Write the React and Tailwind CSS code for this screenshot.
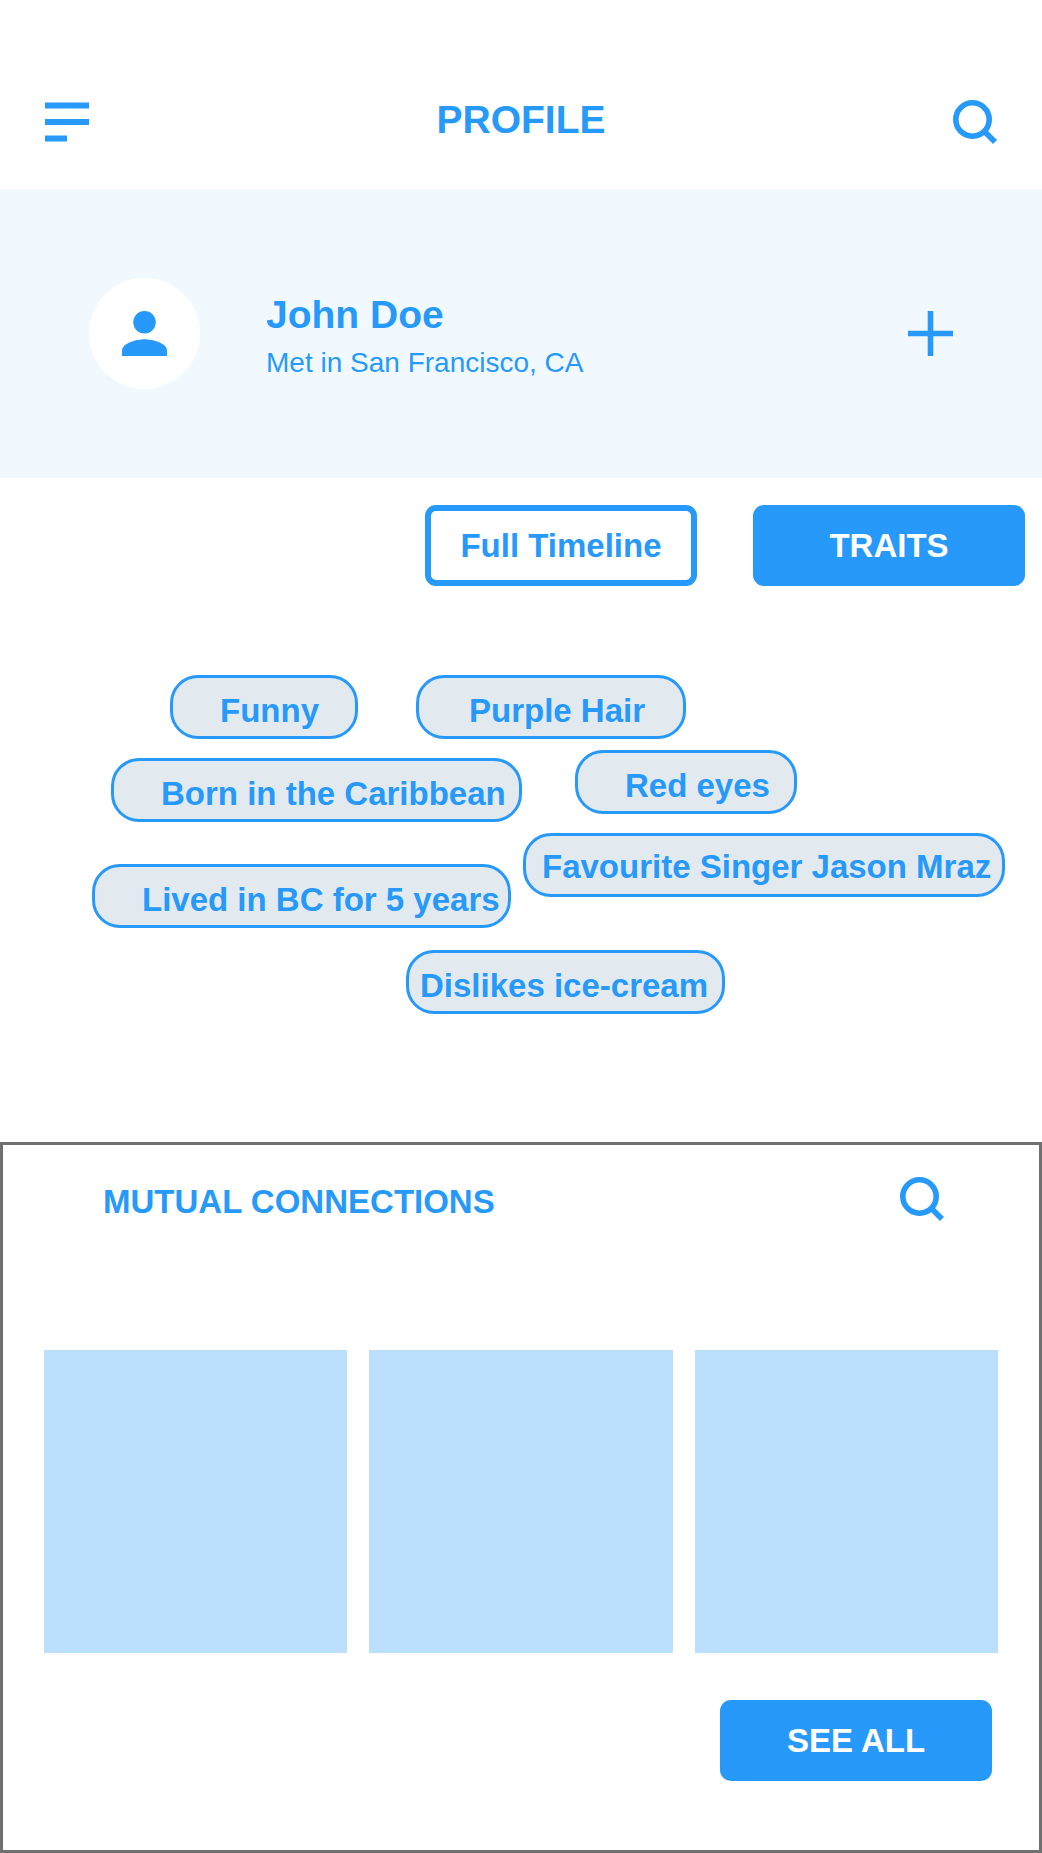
const traitRows = [
  {
    row: "gap-[58px] pl-[170px]",
    traits: [
      { label: "Funny", box: "w-[188px] pl-[47px] pt-[8px]" },
      { label: "Purple Hair", box: "w-[270px] pl-[50px] pt-[8px]" },
    ],
  },
  {
    row: "mt-[11px] gap-[53px] pl-[111px]",
    traits: [
      { label: "Born in the Caribbean", box: "mt-2 w-[411px] pl-[47px] pt-[8px]" },
      { label: "Red eyes", box: "w-[222px] pl-[47px] pt-[8px]" },
    ],
  },
  {
    row: "mt-[11px] gap-[12px] pl-[92px]",
    traits: [
      { label: "Lived in BC for 5 years", box: "mt-[31px] w-[419px] pl-[47px] pt-[8px]" },
      { label: "Favourite Singer Jason Mraz", box: "w-[482px] pl-4 pt-[4px]" },
    ],
  },
  {
    row: "mt-[22px] pl-[406px]",
    traits: [{ label: "Dislikes ice-cream", box: "w-[319px] pl-[11px] pt-[8px]" }],
  },
];

const connections = ["First connection", "Second connection", "Third connection"];

function SearchIcon() {
  return (
    <svg className="size-[44px]" viewBox="0 0 44 44" fill="none" stroke="currentColor" strokeWidth="5.6" aria-hidden="true">
      <circle cx="19.5" cy="19.5" r="16.7" />
      <path d="M31 31L42 42" />
    </svg>
  );
}

function ActionButton({ outlined, children }) {
  return (
    <button
      type="button"
      className={
        outlined
          ? "h-[81px] w-[272px] rounded-[11px] border-[6px] border-[#2699fb] bg-white text-[33px] font-bold"
          : "h-[81px] w-[272px] rounded-[11px] bg-[#2699fb] text-[33px] font-bold text-white"
      }
    >
      {children}
    </button>
  );
}

export default function App() {
  return (
    <main className="bg-white font-['Liberation_Sans',Arial,sans-serif] text-[#2699fb]">
      <header className="flex h-[189px] items-center justify-between px-[45px] pt-[55px]">
        <button type="button" aria-label="Menu">
          <svg className="h-[40px] w-[44px]" viewBox="0 0 44 40" fill="currentColor" aria-hidden="true">
            <path d="M0 .5h44v6H0zM0 17h44v6H0zM0 33.500h22v6H0z" />
          </svg>
        </button>
        <h1 className="pb-1 text-[39px] leading-[48px] font-bold">PROFILE</h1>
        <button type="button" aria-label="Search">
          <SearchIcon />
        </button>
      </header>

      <section className="flex items-start bg-[#f1f9ff] px-[89px] pt-[89px] pb-[89px]">
        <div className="flex size-[111px] shrink-0 items-center justify-center rounded-full bg-white">
          <svg className="size-[45px]" viewBox="4 4 16 16" fill="currentColor" aria-hidden="true">
            <circle cx="12" cy="8" r="4" />
            <path d="M12 14c-2.67 0-8 1.34-8 4v2h16v-2c0-2.66-5.33-4-8-4z" />
          </svg>
        </div>
        <div className="ml-[66px] grow pt-[11px]">
          <h2 className="text-[39px] leading-[52px] font-bold">John Doe</h2>
          <p className="text-[28px] leading-[44px]">Met in San Francisco, CA</p>
        </div>
        <button type="button" aria-label="Add" className="mt-[33px]">
          <svg className="size-[45px]" viewBox="0 0 45 45" fill="none" stroke="currentColor" strokeWidth="5.6" aria-hidden="true">
            <path d="M22.5 0v45M0 22.5h45" />
          </svg>
        </button>
      </section>

      <div className="flex justify-end gap-[56px] pt-[27px] pr-[17px]">
        <ActionButton outlined>Full Timeline</ActionButton>
        <ActionButton>TRAITS</ActionButton>
      </div>

      <section aria-label="Traits" className="pt-[89px]">
        {traitRows.map(({ row, traits }) => (
          <ul key={traits[0].label} className={`flex items-start ${row}`}>
            {traits.map(({ label, box }) => (
              <li
                key={label}
                className={`flex h-[64px] shrink-0 items-center rounded-[28px] border-[3px] border-[#2699fb] bg-[#e2eaf0] text-[33px] font-bold whitespace-nowrap ${box}`}
              >
                {label}
              </li>
            ))}
          </ul>
        ))}
      </section>

      <section className="mt-[128px] border-[3px] border-[#707070] px-[41px] pt-[32px] pb-[69px]">
        <div className="flex items-start justify-between pr-[54px] pl-[59px]">
          <h2 className="pt-[1px] text-[33px] leading-[48px] font-bold">MUTUAL CONNECTIONS</h2>
          <button type="button" aria-label="Search connections">
            <SearchIcon />
          </button>
        </div>
        <ul className="mt-[124px] grid grid-cols-3 gap-[22px]">
          {connections.map((name) => (
            <li key={name} aria-label={name} className="aspect-square bg-[#bcdffe]" />
          ))}
        </ul>
        <div className="mt-[47px] flex justify-end pr-[6px]">
          <ActionButton>SEE ALL</ActionButton>
        </div>
      </section>
    </main>
  );
}
